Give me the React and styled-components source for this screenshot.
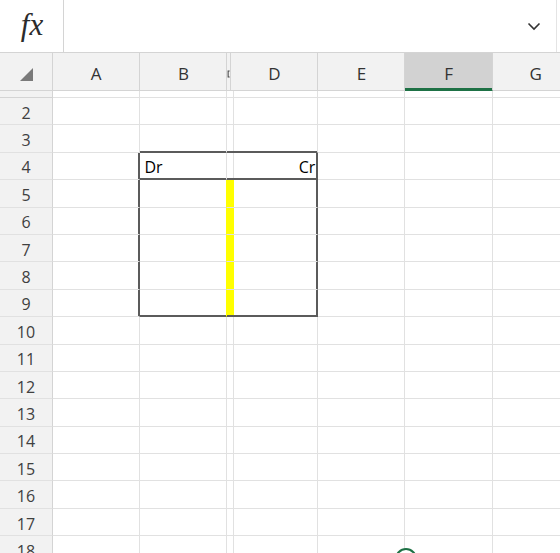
import React from 'react'
import styled, { createGlobalStyle, css } from 'styled-components'

const GRID = '#e1e1e1'
const HEAD_LINE = '#d4d4d4'
const EDGE = '#5b5b5b'
const YELLOW = '#ffff00'
const GREEN = '#1e7145'

const columns = [
  { key: 'A', width: 87.4 },
  { key: 'B', width: 87 },
  { key: 'C', width: 4, hidden: true },
  { key: 'D', width: 87 },
  { key: 'E', width: 87 },
  { key: 'F', width: 87.4, selected: true },
  { key: 'G', width: 87 }
]

const rows = Array.from({ length: 17 }, (_, i) => i + 2)

const content = {
  B4: { text: 'Dr', align: 'left' },
  D4: { text: 'Cr', align: 'right' }
}

// T-account box around B4:D9 with the yellow divider in the hidden column
const inBox = (col) => ['B', 'C', 'D'].includes(col)
const bodyRow = (row) => row >= 5 && row <= 9

const cellLook = (row, col) => {
  let right = 'grid'
  let bottom = 'grid'
  if ((row === 3 || row === 4 || row === 9) && inBox(col)) bottom = 'edge'
  if ((col === 'A' || col === 'D') && row >= 4 && row <= 9) right = 'edge'
  if ((col === 'B' || col === 'C') && bodyRow(row)) right = 'fill'
  const fill = col === 'C' && bodyRow(row)
  return { right, bottom, fill }
}

const App = () => (
  <Page>
    <GlobalStyle />
    <FormulaBar>
      <FxBox>
        <FxLabel>fx</FxLabel>
      </FxBox>
      <FormulaInput>
        <svg width='14' height='9' viewBox='0 0 14 9'>
          <path d='M1.5 1.5 L7 7 L12.5 1.5' fill='none' stroke='#333' strokeWidth='1.6' />
        </svg>
      </FormulaInput>
    </FormulaBar>

    <Sheet $cols={columns.map((c) => `${c.width}px`).join(' ')}>
      <Corner>
        <svg width='13' height='13' viewBox='0 0 13 13'>
          <path d='M13 0 V13 H0 Z' fill='#7a7a7a' />
        </svg>
      </Corner>
      {columns.map((c) => (
        <ColHeader key={c.key} $selected={c.selected}>
          {c.hidden ? (
            <svg width='4' height='10' viewBox='0 0 4 10'>
              <path d='M3.5 1 H1.5 V9 H3.5' fill='none' stroke='#444' strokeWidth='1.4' />
            </svg>
          ) : (
            c.key
          )}
        </ColHeader>
      ))}

      <RowHeader $collapsed />
      {columns.map((c) => (
        <Cell key={`1${c.key}`} $right='grid' $bottom='grid' />
      ))}

      {rows.map((row) => (
        <React.Fragment key={row}>
          <RowHeader>{row}</RowHeader>
          {columns.map((c) => {
            const look = cellLook(row, c.key)
            const data = content[`${c.key}${row}`]
            return (
              <Cell
                key={`${c.key}${row}`}
                $right={look.right}
                $bottom={look.bottom}
                $fill={look.fill}
                $align={data?.align}
              >
                {data?.text}
              </Cell>
            )
          })}
        </React.Fragment>
      ))}
    </Sheet>

    <FillHandle />
  </Page>
)

export default App

// STYLING
const GlobalStyle = createGlobalStyle`
  html, body {
    margin: 0;
    padding: 0;
    background: #fff;
    overflow: hidden;
  }
  body {
    font-family: "Open Sans", "Noto Sans", sans-serif;
  }
`

const Page = styled.div`
  position: relative;
  width: 560px;
  height: 553px;
  overflow: hidden;
  background: #fff;
`

const FormulaBar = styled.div`
  display: flex;
  height: 52px;
  border-bottom: 1px solid ${HEAD_LINE};
`

const FxBox = styled.div`
  width: 63px;
  border-right: 1px solid ${HEAD_LINE};
  display: flex;
  align-items: center;
  justify-content: center;
`

const FxLabel = styled.span`
  font-family: "Liberation Serif", "DejaVu Serif", serif;
  font-style: italic;
  font-size: 31px;
  color: #2b2b2b;
  margin-top: -3px;
  margin-left: 1px;
`

const FormulaInput = styled.div`
  flex: 1;
  display: flex;
  align-items: center;
  justify-content: flex-end;
  padding-right: 15px;
  margin-right: 3px;
  border-right: 1px solid #e4e4e4;
  svg {
    margin-top: 1px;
  }
`

const Sheet = styled.div`
  display: grid;
  grid-template-columns: 53px ${(p) => p.$cols};
  grid-template-rows: 38px 7px repeat(17, 27.4px);
  width: 580px;
  font-family: "Open Sans", "Noto Sans", sans-serif;
`

const Corner = styled.div`
  background: #f2f2f2;
  border-right: 1px solid ${HEAD_LINE};
  border-bottom: 1px solid ${HEAD_LINE};
  display: flex;
  align-items: center;
  justify-content: center;
  padding: 6px 0 0 1px;
`

const ColHeader = styled.div`
  background: ${(p) => (p.$selected ? '#d2d2d2' : '#f2f2f2')};
  border-right: 1px solid ${HEAD_LINE};
  border-bottom: 1px solid ${(p) => (p.$selected ? GREEN : HEAD_LINE)};
  box-shadow: ${(p) => (p.$selected ? `inset 0 -2px 0 ${GREEN}` : 'none')};
  display: flex;
  align-items: center;
  justify-content: center;
  padding-top: 4px;
  font-size: 17px;
  color: #333;
  overflow: hidden;
`

const RowHeader = styled.div`
  background: #f2f2f2;
  border-right: 1px solid ${HEAD_LINE};
  border-bottom: 1px solid ${(p) => (p.$collapsed ? HEAD_LINE : GRID)};
  display: flex;
  align-items: center;
  justify-content: center;
  padding-top: 3px;
  font-size: 16px;
  color: #404040;
`

const lineColor = (kind) => (kind === 'edge' ? EDGE : kind === 'fill' ? YELLOW : GRID)

const Cell = styled.div`
  min-width: 0;
  border-right: 1px solid ${(p) => lineColor(p.$right)};
  border-bottom: 1px solid ${(p) => lineColor(p.$bottom)};
  background: ${(p) => (p.$fill ? YELLOW : 'transparent')};
  display: flex;
  align-items: flex-end;
  justify-content: ${(p) => (p.$align === 'right' ? 'flex-end' : 'flex-start')};
  padding: 0 2px 1px 4px;
  font-size: 16px;
  line-height: 22px;
  color: #000;
  white-space: nowrap;
  ${(p) => {
    const shadows = []
    if (p.$bottom === 'edge') shadows.push(`inset 0 -1px 0 ${EDGE}`)
    if (p.$right === 'edge') shadows.push(`inset -1px 0 0 ${EDGE}`)
    return shadows.length
      ? css`
          box-shadow: ${shadows.join(', ')};
        `
      : ''
  }}
`

const FillHandle = styled.div`
  position: absolute;
  left: 395px;
  top: 548px;
  width: 18px;
  height: 18px;
  border: 2.5px solid ${GREEN};
  border-radius: 50%;
  background: #fff;
`
